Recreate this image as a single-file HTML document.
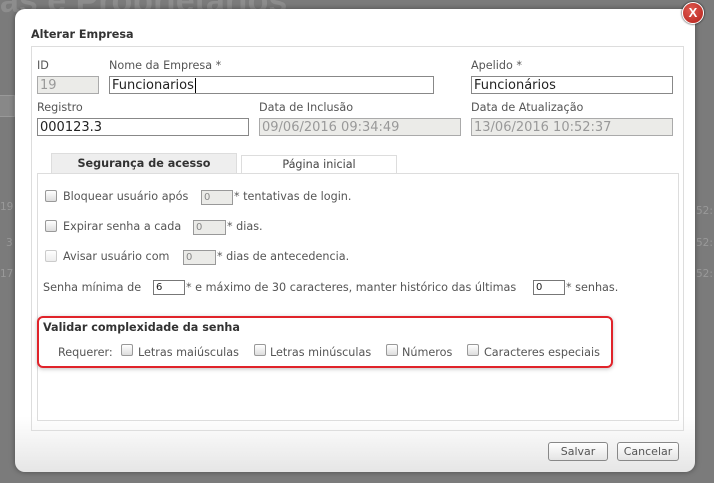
<!DOCTYPE html>
<html><head><meta charset="utf-8"><style>
*{box-sizing:border-box;margin:0;padding:0}
body{width:714px;height:483px;overflow:hidden;background:#7b7b7b;font-family:"DejaVu Sans","Liberation Sans",sans-serif;font-size:10.5px;color:#444;position:relative}
.a{position:absolute}
.dlg{left:15px;top:9px;width:680px;height:463px;border-radius:10px;background:linear-gradient(#fff 0,#fff 88%,#e6e6e6 100%);box-shadow:0 0 6px rgba(0,0,0,.4)}
.inp{position:absolute;height:18px;border:1px solid #888;background:#fff;font-size:13px;color:#222;padding-left:2px;line-height:17px}
.dis{background:#ebebe8;color:#999;border-color:#aaa}
.sm{position:absolute;height:15px;border:1px solid #999;background:#ebebe8;font-size:10px;color:#888;padding-left:2px;line-height:13px}
.cb{position:absolute;width:12px;height:12px;border:1px solid #999;border-radius:2px;background:linear-gradient(#fff,#ddd)}
.lbl{position:absolute;font-size:11.2px;color:#555}
.btn{position:absolute;height:19px;border:1px solid #888;border-radius:3px;background:linear-gradient(#fff,#e4e4e4);font-size:11px;color:#555;text-align:center;line-height:17px}
</style></head><body>
<div class="a" style="left:0;top:-18px;font:bold 34px 'Liberation Sans',sans-serif;color:#8d8d8d">as e Proprietarios</div>
<div class="a" style="left:0;top:95px;width:15px;height:22px;border:1px solid #999;border-left:none;background:#888"></div>
<div class="a" style="left:0;top:201px;color:#999">19</div>
<div class="a" style="left:6px;top:237px;color:#999">3</div>
<div class="a" style="left:0;top:268px;color:#999">17</div>
<div class="a" style="left:696px;top:205px;color:#999">52:</div>
<div class="a" style="left:696px;top:237px;color:#999">52:</div>
<div class="a" style="left:696px;top:268px;color:#999">52:</div>
<div class="a dlg"></div>
<div class="a" style="left:31px;top:28px;font-weight:bold;font-size:11.2px;color:#333">Alterar Empresa</div>
<div class="a" style="left:31px;top:46px;width:653px;height:385px;border:1px solid #ddd"></div>
<div class="lbl" style="left:37px;top:59px">ID</div>
<div class="lbl" style="left:109px;top:59px">Nome da Empresa *</div>
<div class="lbl" style="left:471px;top:59px">Apelido *</div>
<div class="inp dis" style="left:37px;top:76px;width:62px">19</div>
<div class="inp" style="left:109px;top:76px;width:325px">Funcionarios<span style="border-left:1px solid #000;margin-left:1px"></span></div>
<div class="inp" style="left:471px;top:76px;width:202px">Funcionários</div>
<div class="lbl" style="left:37px;top:101px">Registro</div>
<div class="lbl" style="left:259px;top:101px">Data de Inclusão</div>
<div class="lbl" style="left:471px;top:101px">Data de Atualização</div>
<div class="inp" style="left:37px;top:118px;width:212px">000123.3</div>
<div class="inp dis" style="left:259px;top:118px;width:202px">09/06/2016 09:34:49</div>
<div class="inp dis" style="left:471px;top:118px;width:202px">13/06/2016 10:52:37</div>
<div class="a" style="left:51px;top:153px;width:186px;height:21px;background:#eee;border:1px solid #ddd;border-bottom:none;text-align:center;font-weight:bold;font-size:11.2px;line-height:20px;color:#333">Segurança de acesso</div>
<div class="a" style="left:241px;top:155px;width:156px;height:19px;background:#fff;border:1px solid #ddd;border-bottom:none;text-align:center;font-size:11.2px;line-height:18px;color:#444">Página inicial</div>
<div class="a" style="left:37px;top:173px;width:642px;height:248px;border:1px solid #ddd;background:#fff"></div>
<div class="cb" style="left:45px;top:190px"></div>
<div class="lbl" style="left:63px;top:190px">Bloquear usuário após</div>
<div class="sm" style="left:201px;top:190px;width:32px">0</div>
<div class="lbl" style="left:234px;top:190px">* tentativas de login.</div>
<div class="cb" style="left:45px;top:220px"></div>
<div class="lbl" style="left:63px;top:220px">Expirar senha a cada</div>
<div class="sm" style="left:193px;top:220px;width:33px">0</div>
<div class="lbl" style="left:227px;top:220px">* dias.</div>
<div class="cb" style="left:45px;top:250px;opacity:.5"></div>
<div class="lbl" style="left:63px;top:250px">Avisar usuário com</div>
<div class="sm" style="left:183px;top:250px;width:33px">0</div>
<div class="lbl" style="left:217px;top:250px">* dias de antecedencia.</div>
<div class="lbl" style="left:43px;top:281px">Senha mínima de</div>
<div class="sm" style="left:153px;top:280px;width:32px;background:#fff;color:#222;border-color:#777">6</div>
<div class="lbl" style="left:186px;top:281px">* e máximo de 30 caracteres, manter histórico das últimas</div>
<div class="sm" style="left:533px;top:280px;width:32px;background:#fff;color:#222;border-color:#777">0</div>
<div class="lbl" style="left:566px;top:281px">* senhas.</div>
<div class="a" style="left:37px;top:316px;width:576px;height:52px;border:2px solid #e0232a;border-radius:6px;box-shadow:0 1px 4px rgba(0,0,0,.25)"></div>
<div class="a" style="left:43px;top:321px;font-weight:bold;font-size:11.2px;color:#333">Validar complexidade da senha</div>
<div class="lbl" style="left:58px;top:346px">Requerer:</div>
<div class="cb" style="left:121px;top:344px"></div>
<div class="lbl" style="left:138px;top:346px">Letras maiúsculas</div>
<div class="cb" style="left:254px;top:344px"></div>
<div class="lbl" style="left:270px;top:346px">Letras minúsculas</div>
<div class="cb" style="left:386px;top:344px"></div>
<div class="lbl" style="left:402px;top:346px">Números</div>
<div class="cb" style="left:467px;top:344px"></div>
<div class="lbl" style="left:484px;top:346px">Caracteres especiais</div>
<div class="btn" style="left:548px;top:442px;width:60px">Salvar</div>
<div class="btn" style="left:617px;top:442px;width:62px">Cancelar</div>
<div class="a" style="left:682px;top:2px;width:22px;height:22px;border-radius:50%;background:radial-gradient(circle at 40% 35%,#e05a50,#b3201a);border:1.5px solid #fff;box-shadow:0 0 2px #000;color:#fff;font:bold 13px 'Liberation Sans',sans-serif;text-align:center;line-height:19px">X</div>
</body></html>
